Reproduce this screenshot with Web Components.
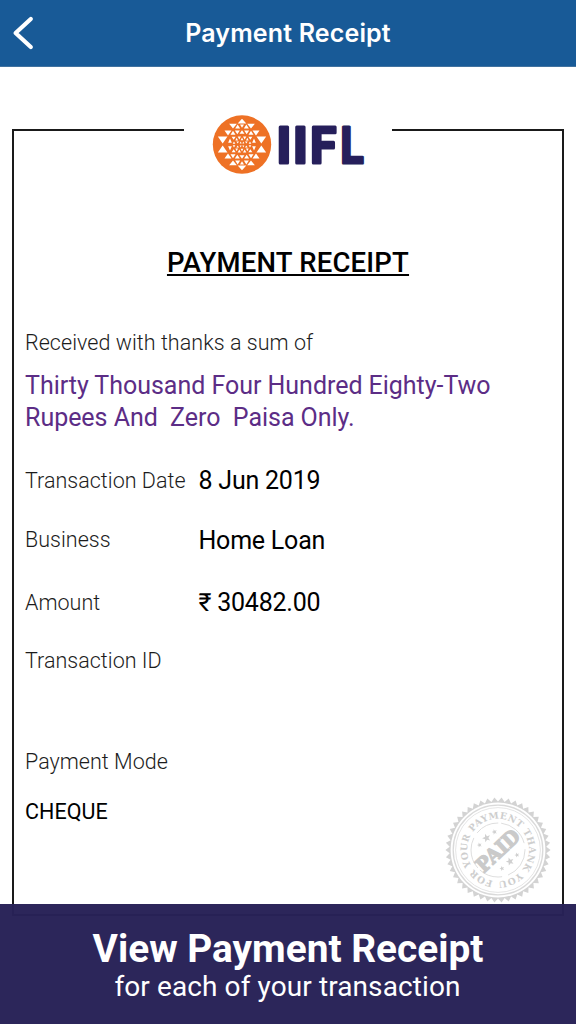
<!DOCTYPE html>
<html lang="en">
<head>
<meta charset="utf-8">
<meta name="viewport" content="width=device-width, initial-scale=1">
<title>Payment Receipt</title>
<style>
    body {
        margin: 0;
        background: #fff;
        font-family: Roboto, "Liberation Sans", sans-serif;
        color: #000;
    }
</style>
</head>
<body>
<receipt-screen>
    <nav-bar slot="nav">Payment Receipt</nav-bar>
    <receipt-card>
        <iifl-logo slot="logo"></iifl-logo>
        <span slot="title">PAYMENT RECEIPT</span>
        <receipt-sum label="Received with thanks a sum of">Thirty Thousand Four Hundred Eighty-Two<br>Rupees And&nbsp; Zero&nbsp; Paisa Only.</receipt-sum>
        <receipt-row label="Transaction Date" style="--top: 32px; --shift: -0.5px">8 Jun 2019</receipt-row>
        <receipt-row label="Business" style="--top: 29px; --shift: 1px">Home Loan</receipt-row>
        <receipt-row label="Amount" style="--top: 33px; --shift: -0.5px">₹ 30482.00</receipt-row>
        <receipt-row label="Transaction ID" style="--top: 28px"></receipt-row>
        <receipt-row label="Payment Mode" style="--top: 71px"></receipt-row>
        <receipt-row label="" stacked style="--top: 20px">CHEQUE</receipt-row>
        <paid-stamp slot="stamp"></paid-stamp>
    </receipt-card>
    <caption-banner slot="banner">
        <span slot="title">View Payment Receipt</span>
        for each of your transaction
    </caption-banner>
</receipt-screen>

<script>
/* || Screen layout */
const ReceiptScreenTemplate = document.createElement("template");
ReceiptScreenTemplate.innerHTML = `
    <style>
        :host {
            display: grid;
            grid-template-rows: 66px 838px 120px;
            width: 576px;
            height: 1024px;
            overflow: hidden;
        }
        main {
            padding: 63px 12px 0 12px;
        }
        ::slotted([slot=banner]) {
            position: relative;
            z-index: 1;
        }
    </style>
    <slot name=nav></slot>
    <main><slot></slot></main>
    <slot name=banner></slot>
`;

class ReceiptScreen extends HTMLElement {
    constructor() {
        super();
        this.attachShadow( {mode: 'open'} );
        this.shadowRoot.appendChild(ReceiptScreenTemplate.content.cloneNode(true));
    }
}

customElements.define("receipt-screen", ReceiptScreen);


const NavBarTemplate = document.createElement("template");
NavBarTemplate.innerHTML = `
    <style>
        :host {
            display: grid;
            grid-template-columns: 48px 1fr 48px;
            align-items: center;
            background: #185a97;
            border-bottom: 1px solid #41729f;
            box-sizing: border-box;
            height: 67px;
            color: #fff;
        }
        svg {
            display: block;
        }
        h1 {
            margin: 0;
            font: 600 25px/32px Inter, sans-serif;
            letter-spacing: 0.15px;
            text-align: center;
        }
    </style>
    <svg width=48 height=66 viewBox="0 0 48 66" fill=none stroke=#fff stroke-width=4.2 stroke-linecap=round stroke-linejoin=round>
        <path d="M30.8 19 15.6 33 30.8 47"/>
    </svg>
    <h1><slot></slot></h1>
`;

class NavBar extends HTMLElement {
    constructor() {
        super();
        this.attachShadow( {mode: 'open'} );
        this.shadowRoot.appendChild(NavBarTemplate.content.cloneNode(true));
    }
}

customElements.define("nav-bar", NavBar);


/* || Receipt card */
const ReceiptCardTemplate = document.createElement("template");
ReceiptCardTemplate.innerHTML = `
    <style>
        :host {
            display: block;
            position: relative;
            box-sizing: border-box;
            height: 787px;
            border: solid #1a1a1a;
            border-width: 0 2px 2px 2px;
        }
        header {
            display: flex;
            align-items: flex-start;
            height: 119px;
            margin: 0 -1px;
        }
        header i {
            flex: 1;
            height: 2px;
            background: #1a1a1a;
        }
        .logo {
            width: 208px;
            margin-top: -15px;
        }
        h2 {
            margin: 0;
            height: 80px;
            text-align: center;
            font-size: 27.5px;
            line-height: 30px;
            font-weight: 500;
            letter-spacing: 0.2px;
            text-decoration: underline;
            text-decoration-thickness: 2px;
            text-underline-offset: 2px;
        }
        .body {
            padding-left: 11px;
        }
        .stamp {
            position: absolute;
            right: 11.5px;
            top: 667.5px;
        }
    </style>
    <header><i></i><div class=logo><slot name=logo></slot></div><i></i></header>
    <h2><slot name=title></slot></h2>
    <div class=body><slot></slot></div>
    <div class=stamp><slot name=stamp></slot></div>
`;

class ReceiptCard extends HTMLElement {
    constructor() {
        super();
        this.attachShadow( {mode: 'open'} );
        this.shadowRoot.appendChild(ReceiptCardTemplate.content.cloneNode(true));
    }
}

customElements.define("receipt-card", ReceiptCard);


const ReceiptSumTemplate = document.createElement("template");
ReceiptSumTemplate.innerHTML = `
    <style>
        :host {
            display: block;
            height: 106px;
        }
        .label {
            font-size: 21.5px;
            line-height: 30px;
            font-weight: 300;
            color: #1c1c1c;
            letter-spacing: 0.04px;
        }
        .sum {
            margin-top: 12px;
            font-size: 25px;
            line-height: 32px;
            letter-spacing: -0.03px;
            color: #5c2d86;
            white-space: nowrap;
        }
    </style>
    <div class=label></div>
    <div class=sum><slot></slot></div>
`;

class ReceiptSum extends HTMLElement {
    constructor() {
        super();
        this.attachShadow( {mode: 'open'} );
        this.shadowRoot.appendChild(ReceiptSumTemplate.content.cloneNode(true));
    }
    connectedCallback() {
        this.shadowRoot.querySelector(".label").textContent = this.getAttribute("label");
    }
}

customElements.define("receipt-sum", ReceiptSum);


const ReceiptRowTemplate = document.createElement("template");
ReceiptRowTemplate.innerHTML = `
    <style>
        :host {
            display: grid;
            grid-template-columns: 173px 1fr;
            height: 30px;
            line-height: 30px;
            margin-top: var(--top);
            white-space: nowrap;
        }
        :host([stacked]) {
            grid-template-columns: 1fr;
        }
        .label {
            font-size: 21.5px;
            font-weight: 300;
            color: #1c1c1c;
            letter-spacing: 0.02px;
        }
        .value {
            font-size: 25px;
            letter-spacing: -0.22px;
            margin-top: var(--shift, 0);
            padding-left: 0.5px;
        }
        :host([stacked]) .label {
            display: none;
        }
        :host([stacked]) .value {
            font-size: 21.5px;
            letter-spacing: 0.05px;
            padding-left: 0;
        }
    </style>
    <div class=label></div>
    <div class=value><slot></slot></div>
`;

class ReceiptRow extends HTMLElement {
    constructor() {
        super();
        this.attachShadow( {mode: 'open'} );
        this.shadowRoot.appendChild(ReceiptRowTemplate.content.cloneNode(true));
    }
    connectedCallback() {
        this.shadowRoot.querySelector(".label").textContent = this.getAttribute("label");
    }
}

customElements.define("receipt-row", ReceiptRow);


/* || Logo */
// Top left quarter of the emblem: [x, y, width, height, points up]
const TRIANGLES = [
    [0, -77, 26, 14, true],
    [-27, -62, 23, 14, false], [-13, -60, 15, 12, true], [0, -60, 12, 10, false],
    [-42, -42, 21, 15, false], [-27, -41, 15, 12, true], [-14, -42, 15, 11, false], [0, -43, 15, 11, true],
    [-58, -24, 29, 21, false], [-36, -18, 11, 13, true],
    [-25, -23, 12, 9, false], [-8, -24, 10, 9, false],
    [-16, -20, 8, 8, true], [0, -21, 8, 8, true],
    [-24, -9, 8, 7, true], [-13, -9, 8, 6, false], [-4, -9, 6, 6, true]
];

function emblem() {
    let d = "";
    for (const [cx, y, w, h, up] of TRIANGLES) {
        for (const x of (cx == 0 ? [0] : [cx, -cx])) {
            for (const s of [1, -1]) {
                const base = s * (up ? y + h : y);
                const tip = s * (up ? y : y + h);
                d += `M${x - w / 2} ${base}H${x + w / 2}L${x} ${tip}Z`;
            }
        }
    }
    return d;
}

class IiflLogo extends HTMLElement {
    constructor() {
        super();
        this.attachShadow( {mode: 'open'} );
        this.shadowRoot.innerHTML = `
            <style>
                :host {
                    display: block;
                    height: 62px;
                }
                text {
                    font: 700 50.5px Roboto, sans-serif;
                    fill: #261f5b;
                    stroke: #261f5b;
                    stroke-width: 3px;
                    stroke-linejoin: round;
                }
            </style>
            <svg width=208 height=62 viewBox="184 114 208 62">
                <circle cx=242 cy=144.5 r=29.2 fill=#ee7125 />
                <path transform="translate(242 144.5) scale(.33333)" fill=#fff d="${emblem()}"/>
                <text y=162.5><tspan x=276.4>I</tspan><tspan x=293>I</tspan><tspan x=310.3 textLength=26 lengthAdjust=spacingAndGlyphs>F</tspan><tspan x=340.6 textLength=23 lengthAdjust=spacingAndGlyphs>L</tspan></text>
            </svg>
        `;
    }
}

customElements.define("iifl-logo", IiflLogo);


/* || Paid stamp */
function star(cx, cy, r) {
    const points = [];
    for (let i = 0; i < 10; i++) {
        const a = (i * 36 - 110) * Math.PI / 180;
        const k = i % 2 ? r * 0.42 : r;
        points.push((cx + k * Math.cos(a)).toFixed(2) + "," + (cy + k * Math.sin(a)).toFixed(2));
    }
    return `<polygon points="${points.join(" ")}"/>`;
}

function sawEdge(count, outer, inner) {
    const points = [];
    for (let i = 0; i < count * 2; i++) {
        const a = i * Math.PI / count;
        const r = i % 2 ? inner : outer;
        points.push((r * Math.cos(a)).toFixed(2) + "," + (r * Math.sin(a)).toFixed(2));
    }
    return points.join(" ");
}

class PaidStamp extends HTMLElement {
    constructor() {
        super();
        this.attachShadow( {mode: 'open'} );
        this.shadowRoot.innerHTML = `
            <style>
                :host {
                    display: block;
                    width: 106px;
                    height: 106px;
                }
                text {
                    font-family: "DejaVu Serif", serif;
                    font-weight: bold;
                }
            </style>
            <svg width=106 height=106 viewBox="-53 -53 106 106" fill=#d0d0d0>
                <polygon points="${sawEdge(46, 52.6, 48.4)}" fill=#d3d3d3 />
                <circle r=47.4 fill=#fff />
                <g fill=none stroke=#dadada>
                    <circle r=44.8 stroke-width=1.3 />
                    <circle r=42.4 stroke-width=.7 />
                    <circle r=27 stroke-width=.9 stroke-dasharray="32 6 24 3" />
                </g>
                <path id=ring fill=none d="M-2 31.2A31.3 31.3 0 0 1-2-31.2A31.3 31.3 0 0 1 2-31.2A31.3 31.3 0 0 1 2 31.2"/>
                <text font-size=9.2 fill=#cecece><textPath href="#ring" startOffset=3 textLength=189>FOR YOUR PAYMENT THANK YOU</textPath></text>
                ${star(-11.5, -12, 4.4)}${star(-3.5, -18, 2.8)}${star(-18.5, -5, 2.6)}
                ${star(12, 11.5, 4.2)}${star(4, 18.5, 2.6)}${star(19, 5, 2.6)}
                <text transform="rotate(-43)" x=-26.5 y=7.4 font-size=20 textLength=52 lengthAdjust=spacingAndGlyphs fill=#cacaca stroke=#cacaca stroke-width=1.3>PAID</text>
            </svg>
        `;
    }
}

customElements.define("paid-stamp", PaidStamp);


/* || Banner */
const CaptionBannerTemplate = document.createElement("template");
CaptionBannerTemplate.innerHTML = `
    <style>
        :host {
            display: block;
            box-sizing: border-box;
            padding-top: 23px;
            background: rgba(40, 34, 87, 0.98);
            color: #fff;
            text-align: center;
            white-space: nowrap;
        }
        .title {
            font-size: 38.8px;
            line-height: 44px;
            font-weight: 700;
        }
        .sub {
            font-size: 28px;
            line-height: 32px;
            letter-spacing: 0.1px;
            margin-left: -1px;
        }
    </style>
    <div class=title><slot name=title></slot></div>
    <div class=sub><slot></slot></div>
`;

class CaptionBanner extends HTMLElement {
    constructor() {
        super();
        this.attachShadow( {mode: 'open'} );
        this.shadowRoot.appendChild(CaptionBannerTemplate.content.cloneNode(true));
    }
}

customElements.define("caption-banner", CaptionBanner);
</script>
</body>
</html>
